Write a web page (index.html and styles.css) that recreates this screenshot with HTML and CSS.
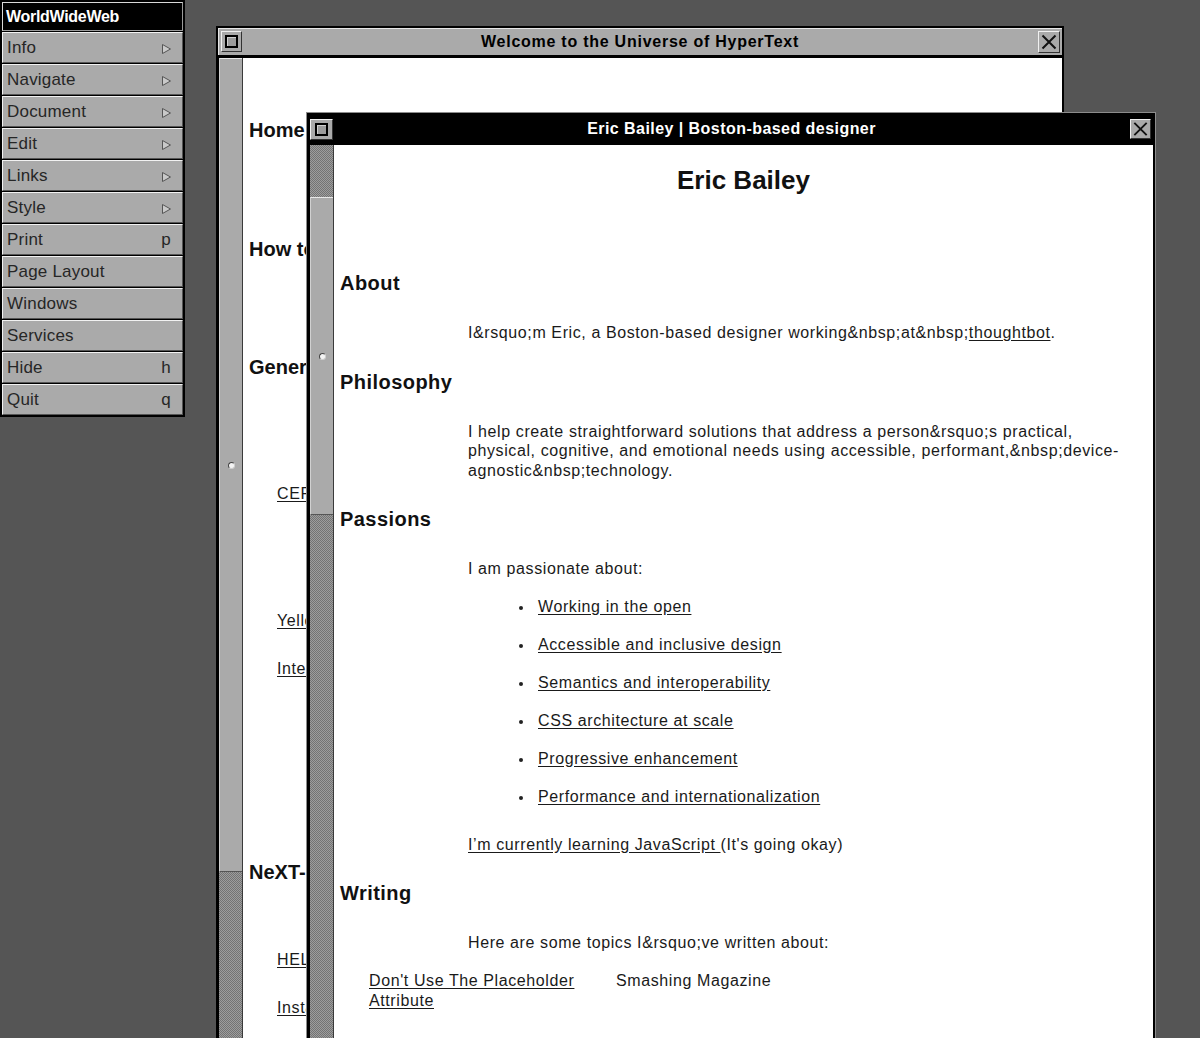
FILE: index.html
```html
<!DOCTYPE html>
<html lang="en">
<head>
<meta charset="utf-8">
<title>WorldWideWeb</title>
<link rel="stylesheet" href="styles.css">
</head>
<body>
<nav class="menu">
  <div class="menu-title">WorldWideWeb</div>
  <div class="menu-item"><span>Info</span><svg class="sub" width="9" height="10" viewBox="0 0 9 10"><polygon points="0.5,0.5 8.5,5 0.5,9.5" fill="#c9c9c9" stroke="#555" stroke-width="1"/></svg></div>
  <div class="menu-item"><span>Navigate</span><svg class="sub" width="9" height="10" viewBox="0 0 9 10"><polygon points="0.5,0.5 8.5,5 0.5,9.5" fill="#c9c9c9" stroke="#555" stroke-width="1"/></svg></div>
  <div class="menu-item"><span>Document</span><svg class="sub" width="9" height="10" viewBox="0 0 9 10"><polygon points="0.5,0.5 8.5,5 0.5,9.5" fill="#c9c9c9" stroke="#555" stroke-width="1"/></svg></div>
  <div class="menu-item"><span>Edit</span><svg class="sub" width="9" height="10" viewBox="0 0 9 10"><polygon points="0.5,0.5 8.5,5 0.5,9.5" fill="#c9c9c9" stroke="#555" stroke-width="1"/></svg></div>
  <div class="menu-item"><span>Links</span><svg class="sub" width="9" height="10" viewBox="0 0 9 10"><polygon points="0.5,0.5 8.5,5 0.5,9.5" fill="#c9c9c9" stroke="#555" stroke-width="1"/></svg></div>
  <div class="menu-item"><span>Style</span><svg class="sub" width="9" height="10" viewBox="0 0 9 10"><polygon points="0.5,0.5 8.5,5 0.5,9.5" fill="#c9c9c9" stroke="#555" stroke-width="1"/></svg></div>
  <div class="menu-item"><span>Print</span><span class="key">p</span></div>
  <div class="menu-item"><span>Page Layout</span></div>
  <div class="menu-item"><span>Windows</span></div>
  <div class="menu-item"><span>Services</span></div>
  <div class="menu-item"><span>Hide</span><span class="key">h</span></div>
  <div class="menu-item"><span>Quit</span><span class="key">q</span></div>
</nav>

<section class="win win-back">
  <header class="titlebar">
    <span class="btn-min"><span class="btn-min-inner"></span></span>
    <h2 class="title title-back">Welcome to the Universe of HyperText</h2>
    <span class="btn-close"><svg width="20" height="20" viewBox="0 0 20 20"><path d="M3.5 3.5L16.5 16.5M16.5 3.5L3.5 16.5" stroke="#111" stroke-width="2" fill="none"/></svg></span>
  </header>
  <div class="win-body">
    <div class="scroller">
      <div class="knob knob-back"><span class="dimple"></span></div>
      <div class="track"></div>
    </div>
    <div class="content content-back">
      <div class="bh bh-home">Home</div>
      <div class="bh bh-how">How to</div>
      <div class="bh bh-gen">General</div>
      <a class="bl bl-cern">CERN</a>
      <a class="bl bl-yell">Yellow</a>
      <a class="bl bl-inte">Inter</a>
      <div class="bh bh-next">NeXT-</div>
      <a class="bl bl-help">HELP</a>
      <a class="bl bl-inst">Insta</a>
    </div>
  </div>
</section>

<section class="win win-front">
  <header class="titlebar titlebar-active">
    <span class="btn-min btn-min-front"><span class="btn-min-inner"></span></span>
    <h2 class="title title-front">Eric Bailey | Boston-based designer</h2>
    <span class="btn-close btn-close-front"><svg width="20" height="20" viewBox="0 0 20 20"><path d="M3.5 3.5L16.5 16.5M16.5 3.5L3.5 16.5" stroke="#111" stroke-width="2" fill="none"/></svg></span>
  </header>
  <div class="win-body">
    <div class="scroller">
      <div class="track track-top"></div>
      <div class="knob knob-front"><span class="dimple"></span></div>
      <div class="track"></div>
    </div>
    <div class="content content-front">
      <h1 class="page-title">Eric Bailey</h1>
      <h2 class="sec sec-first">About</h2>
      <p class="indent">I&amp;rsquo;m Eric, a Boston-based designer working&amp;nbsp;at&amp;nbsp;<a>thoughtbot</a>.</p>
      <h2 class="sec">Philosophy</h2>
      <p class="indent">I help create straightforward solutions that address a person&amp;rsquo;s practical, physical, cognitive, and emotional needs using accessible, performant,&amp;nbsp;device-agnostic&amp;nbsp;technology.</p>
      <h2 class="sec">Passions</h2>
      <p class="indent">I am passionate about:</p>
      <ul class="passions">
        <li><a>Working in the open</a></li>
        <li><a>Accessible and inclusive design</a></li>
        <li><a>Semantics and interoperability</a></li>
        <li><a>CSS architecture at scale</a></li>
        <li><a>Progressive enhancement</a></li>
        <li><a>Performance and internationalization</a></li>
      </ul>
      <p class="indent"><a>I’m currently learning JavaScript </a>(It's going okay)</p>
      <h2 class="sec">Writing</h2>
      <p class="indent">Here are some topics I&amp;rsquo;ve written about:</p>
      <div class="writing">
        <a>Don't Use The Placeholder Attribute</a>
        <span>Smashing Magazine</span>
      </div>
    </div>
  </div>
</section>
</body>
</html>
```

FILE: styles.css
```css
* { box-sizing: border-box; }

html, body {
  margin: 0;
  padding: 0;
}

body {
  width: 1200px;
  height: 1038px;
  overflow: hidden;
  position: relative;
  background: #555555;
  font-family: "Liberation Sans", Arial, Helvetica, sans-serif;
  color: #1a1a1a;
}

a {
  color: inherit;
  text-decoration: underline;
  text-underline-offset: 2px;
}

/* ---------- Menu ---------- */
.menu {
  position: absolute;
  left: 0;
  top: 0;
  width: 185px;
  padding: 2px;
  background: #000;
  display: flex;
  flex-direction: column;
  gap: 1px;
}

.menu-title {
  height: 29px;
  background: #000;
  color: #fff;
  font-weight: bold;
  font-size: 16px;
  letter-spacing: -0.3px;
  line-height: 27px;
  padding-left: 3px;
  border: 1px solid #9a9a9a;
  border-top-color: #d8d8d8;
  border-left-color: #d8d8d8;
}

.menu-item {
  height: 31px;
  background: #aaaaaa;
  border-top: 1px solid #f2f2f2;
  border-left: 1px solid #f2f2f2;
  border-right: 1px solid #555;
  border-bottom: 1px solid #555;
  display: flex;
  align-items: center;
  justify-content: space-between;
  padding: 0 10px 0 4px;
  font-size: 17px;
  letter-spacing: 0.2px;
  color: #262626;
}

.menu-item .sub {
  margin-right: 1px;
  margin-top: 2px;
}

.menu-item .key {
  font-size: 17px;
  margin-right: 1px;
}

/* ---------- Windows ---------- */
.win {
  position: absolute;
  background: #000;
  border: 2px solid #000;
  display: flex;
  flex-direction: column;
}

.win-back {
  left: 216px;
  top: 26px;
  width: 848px;
  height: 1030px;
  gap: 3px;
}

.win-front {
  left: 307px;
  top: 113px;
  width: 848px;
  height: 940px;
  gap: 2px;
  box-shadow: 0 0 0 1px #8c8c8c;
}

.titlebar {
  flex: none;
  height: 27px;
  background: #aaaaaa;
  box-shadow: inset 1px 1px 0 #e6e6e6;
  display: flex;
  align-items: center;
  padding: 0 2px 0 3px;
}

.titlebar-active {
  height: 28px;
  background: #000;
  box-shadow: none;
  padding: 0 2px 0 1px;
}

.title {
  flex: 1;
  margin: 0;
  text-align: center;
  font-size: 16px;
  font-weight: bold;
  color: #000;
  line-height: 20px;
  white-space: nowrap;
}

.title-back {
  letter-spacing: 0.75px;
}

.title-front {
  letter-spacing: 0.45px;
  color: #fff;
}

.btn-min {
  width: 21px;
  height: 21px;
  flex: none;
  background: #aaaaaa;
  border: 1px solid;
  border-color: #f0f0f0 #333 #333 #f0f0f0;
  display: flex;
  align-items: center;
  justify-content: center;
}

.btn-min-front {
  width: 23px;
  height: 21px;
}

.btn-min-inner {
  width: 13px;
  height: 13px;
  border: 2px solid #000;
  background: #9c9c9c;
  box-shadow: inset 1px 1px 0 #d0d0d0;
}

.btn-close {
  width: 22px;
  height: 22px;
  flex: none;
  background: #aaaaaa;
  border: 1px solid;
  border-color: #f0f0f0 #333 #333 #f0f0f0;
  display: flex;
  align-items: center;
  justify-content: center;
}

.btn-close-front {
  width: 21px;
  height: 20px;
}

.win-body {
  flex: 1;
  display: flex;
  min-height: 0;
}

.scroller {
  flex: none;
  width: 24px;
  margin-left: 1px;
  display: flex;
  flex-direction: column;
  border-right: 1px solid #3a3a3a;
}

.track {
  flex: 1;
  background: repeating-conic-gradient(#737373 0 25%, #9d9d9d 0 50%) 0 0 / 2px 2px;
}

.track-top {
  flex: none;
  height: 52px;
}

.knob {
  flex: none;
  background: #aaaaaa;
  border-top: 1px solid #e8e8e8;
  border-left: 1px solid #d0d0d0;
  border-bottom: 1px solid #555;
  display: flex;
  align-items: center;
  justify-content: center;
}

.knob-back {
  height: 814px;
}

.knob-front {
  height: 318px;
}

.dimple {
  width: 7px;
  height: 7px;
  border-radius: 50%;
  background: #f4f4f4;
  border: 1.5px solid;
  border-color: #444 #cfcfcf #cfcfcf #444;
}

.content {
  flex: 1;
  background: #fff;
  overflow: hidden;
}

/* ---------- Back window content ---------- */
.content-back {
  padding-left: 6px;
  display: flex;
  flex-direction: column;
  align-items: flex-start;
  white-space: nowrap;
}

.bh {
  font-size: 20px;
  font-weight: bold;
  line-height: 20px;
  color: #111;
}

.bl {
  font-size: 16px;
  line-height: 20px;
  margin-left: 28px;
  letter-spacing: 0.6px;
}

.bh-home { margin-top: 62px; }
.bh-how { margin-top: 99px; }
.bh-gen { margin-top: 98px; }
.bl-cern { margin-top: 107px; }
.bl-yell { margin-top: 107px; }
.bl-inte { margin-top: 28px; }
.bh-next { margin-top: 183px; }
.bl-help { margin-top: 68px; }
.bl-inst { margin-top: 28px; }

/* ---------- Front window content ---------- */
.content-front {
  font-size: 16px;
  letter-spacing: 0.6px;
  line-height: 20px;
}

.page-title {
  margin: 20px 0 0;
  font-size: 26px;
  line-height: 30px;
  font-weight: bold;
  text-align: center;
  letter-spacing: 0;
  color: #111;
}

.sec {
  margin: 27px 0 0 6px;
  font-size: 20px;
  line-height: 24px;
  font-weight: bold;
  letter-spacing: 0.45px;
  color: #111;
}

.sec-first {
  margin-top: 76px;
}

.indent {
  margin: 28px 12px 0 134px;
  line-height: 19.5px;
}

.passions {
  list-style: none;
  margin: 18px 0 0 134px;
  padding: 0;
  display: flex;
  flex-direction: column;
  gap: 18px;
}

.passions li {
  display: flex;
  align-items: center;
  padding-left: 51px;
  line-height: 20px;
}

.passions li::before {
  content: "";
  width: 4px;
  height: 4px;
  border-radius: 50%;
  background: #222;
  margin-right: 15px;
  margin-top: 2px;
  flex: none;
}

.writing {
  display: grid;
  grid-template-columns: 216px auto;
  column-gap: 31px;
  margin: 18px 0 0 35px;
  line-height: 20px;
  align-items: start;
}
```
